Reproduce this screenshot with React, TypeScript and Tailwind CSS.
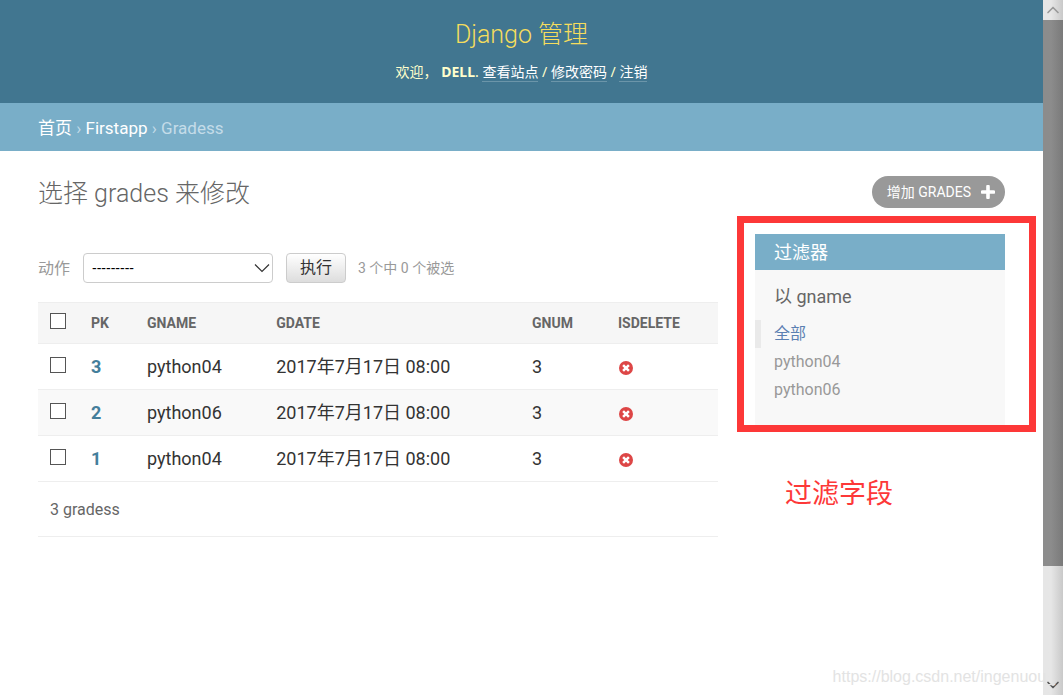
import { ChevronDown, ChevronUp } from "lucide-react";

type Grade = {
  pk: number;
  gname: string;
  gdate: string;
  gnum: number;
};

const grades: Grade[] = [
  { pk: 3, gname: "python04", gdate: "2017年7月17日 08:00", gnum: 3 },
  { pk: 2, gname: "python06", gdate: "2017年7月17日 08:00", gnum: 3 },
  { pk: 1, gname: "python04", gdate: "2017年7月17日 08:00", gnum: 3 },
];

const checkbox =
  "block size-4 appearance-none border border-[#555] bg-white checked:bg-[#79aec8]";

const userLink =
  "inline-block border-b border-[#6b95a9] leading-[19px] text-white";

function Header() {
  return (
    <header className="bg-[#417690] pt-[17px] pb-5 text-center">
      <h1 className="text-[25px] leading-9 font-light text-[#f5dd5d]">
        Django 管理
      </h1>
      <div className="mt-[7px] font-['Noto_Sans','Noto_Sans_CJK_SC',sans-serif] text-sm leading-[23px] text-[#ffc]">
        欢迎， <strong>DELL</strong>.{" "}
        <a href="#site" className={userLink}>
          查看站点
        </a>{" "}
        /{" "}
        <a href="#password" className={userLink}>
          修改密码
        </a>{" "}
        /{" "}
        <a href="#logout" className={userLink}>
          注销
        </a>
      </div>
    </header>
  );
}

function Breadcrumbs() {
  return (
    <nav className="bg-[#79aec8] px-[38px] pt-[13px] pb-[11px] text-[17px] leading-6 text-[#c4dce8]">
      <a href="#home" className="text-white">
        首页
      </a>{" "}
      ›{" "}
      <a href="#firstapp" className="text-white">
        Firstapp
      </a>{" "}
      › Gradess
    </nav>
  );
}

function Actions() {
  return (
    <div className="flex items-center">
      <label htmlFor="action" className="pt-0.5 text-base text-[#999]">
        动作
      </label>
      <div className="relative ml-[13px] w-[190px]">
        <select
          id="action"
          className="block h-[30px] w-full appearance-none rounded border border-[#ccc] bg-white pl-2 font-['Liberation_Sans','Noto_Sans_CJK_SC',sans-serif] text-sm text-black"
        >
          <option>---------</option>
          <option>删除所选的 gradess</option>
        </select>
        <svg
          viewBox="0 0 16 10"
          className="pointer-events-none absolute top-2.5 right-[3px] h-2.5 w-4"
          aria-hidden="true"
        >
          <path d="M1 1.5l7 7 7-7" fill="none" stroke="#333" strokeWidth="1.2" />
        </svg>
      </div>
      <button
        type="button"
        className="ml-[13px] h-[30px] rounded border border-[#ccc] bg-linear-to-b from-white to-[#ddd] px-[13px] text-base leading-6 text-[#333]"
      >
        执行
      </button>
      <span className="ml-3 text-sm text-[#999]">3 个中 0 个被选</span>
    </div>
  );
}

function NoIcon() {
  return (
    <svg viewBox="0 0 14 14" className="block size-3.5" role="img" aria-label="False">
      <circle cx="7" cy="7" r="7" fill="#dd4646" />
      <path
        d="M4.1 4.1l5.8 5.8M9.9 4.1L4.1 9.9"
        stroke="#fff"
        strokeWidth="2.5"
      />
    </svg>
  );
}

function GradesTable() {
  return (
    <table className="mt-[19px] w-full table-fixed border-collapse text-left">
      <colgroup>
        <col className="w-[41px]" />
        <col className="w-14" />
        <col className="w-[19%]" />
        <col />
        <col className="w-[86px]" />
        <col className="w-28" />
      </colgroup>
      <thead className="border-y border-[#eee] bg-[#f6f6f6] text-sm text-[#666]">
        <tr className="h-[41px]">
          <th className="pb-1 pl-3">
            <input type="checkbox" aria-label="全选" className={checkbox} />
          </th>
          <th className="pl-3 font-bold">PK</th>
          <th className="pl-3 font-bold">GNAME</th>
          <th className="pl-3 font-bold">GDATE</th>
          <th className="pl-3 font-bold">GNUM</th>
          <th className="pl-3 font-bold">ISDELETE</th>
        </tr>
      </thead>
      <tbody className="text-lg leading-6 text-[#333]">
        {grades.map((grade) => (
          <tr key={grade.pk} className="h-[46px] border-b border-[#eee] even:bg-[#f9f9f9]">
            <td className="pb-1 pl-3">
              <input
                type="checkbox"
                aria-label={`选择 ${grade.pk}`}
                className={checkbox}
              />
            </td>
            <td className="pl-3 font-bold">
              <a href={`#grade-${grade.pk}`} className="text-[#447e9b]">
                {grade.pk}
              </a>
            </td>
            <td className="pl-3">{grade.gname}</td>
            <td className="pl-3">{grade.gdate}</td>
            <td className="pl-3">{grade.gnum}</td>
            <td className="pt-0.5 pl-[13px]">
              <NoIcon />
            </td>
          </tr>
        ))}
      </tbody>
    </table>
  );
}

function Filter() {
  return (
    <aside className="w-[250px] shrink-0">
      <div className="relative bg-[#f8f8f8] pb-6">
        <h2 className="bg-[#79aec8] px-[19px] pt-[7px] pb-[5px] text-lg leading-6 text-white">
          过滤器
        </h2>
        <h3 className="mt-[15px] px-[19px] text-lg leading-6 text-[#666]">
          以 gname
        </h3>
        <ul className="mt-[11px] text-base leading-7 text-[#999]">
          <li className="border-l-6 border-[#eaeaea] pl-[13px]">
            <a href="#all" className="text-[#5b80b2]">
              全部
            </a>
          </li>
          <li className="pl-[19px]">
            <a href="#python04">python04</a>
          </li>
          <li className="pl-[19px]">
            <a href="#python06">python06</a>
          </li>
        </ul>
        <div className="pointer-events-none absolute -top-[18px] -right-[31px] -bottom-1 -left-[18px] border-7 border-[#fd3838]" />
      </div>
      <p className="mt-12 pl-[30px] text-[27px] leading-9 text-[#fd3838]">
        过滤字段
      </p>
    </aside>
  );
}

function Scrollbar() {
  return (
    <div className="flex w-5 shrink-0 flex-col bg-linear-to-r from-[#e6e6e6] from-40% to-[#c9c9c9]">
      <div className="flex h-5 items-center justify-center text-[#999]">
        <ChevronUp className="size-5" strokeWidth={2} />
      </div>
      <div className="h-[546px] bg-linear-to-r from-[#8c8c8c] from-40% to-[#7a7a7a]" />
      <div className="mt-auto flex h-5 items-center justify-center text-[#555]">
        <ChevronDown className="size-5" strokeWidth={2} />
      </div>
    </div>
  );
}

export default function App() {
  return (
    <div className="relative flex min-h-screen bg-white font-[Roboto,'Noto_Sans_CJK_SC',sans-serif]">
      <div className="min-w-0 flex-1">
        <Header />
        <Breadcrumbs />
        <main className="px-[38px] pt-[25px]">
          <div className="flex items-start justify-between">
            <h1 className="text-[25px] leading-9 font-light text-[#666]">
              选择 grades 来修改
            </h1>
            <a
              href="#add"
              className="flex h-8 items-center rounded-full bg-[#999] pr-2.5 pl-[15px] text-sm text-white"
            >
              增加 GRADES
              <svg viewBox="0 0 14 14" className="ml-2.5 size-3.5" aria-hidden="true">
                <path
                  d="M7 1.5v11M1.5 7h11"
                  stroke="#fff"
                  strokeWidth="3.6"
                  strokeLinecap="round"
                />
              </svg>
            </a>
          </div>
          <div className="mt-[22px] flex items-start gap-[37px]">
            <section className="min-w-0 flex-1 pt-[19px]">
              <Actions />
              <GradesTable />
              <p className="border-b border-[#eee] px-3 pt-4 pb-[14px] text-base leading-6 text-[#666]">
                3 gradess
              </p>
            </section>
            <Filter />
          </div>
        </main>
      </div>
      <Scrollbar />
      <p className="pointer-events-none absolute right-2 bottom-2 font-['Liberation_Sans',sans-serif] text-base leading-5 text-[#e3e3e3]">
        https://blog.csdn.net/ingenuou_
      </p>
    </div>
  );
}
